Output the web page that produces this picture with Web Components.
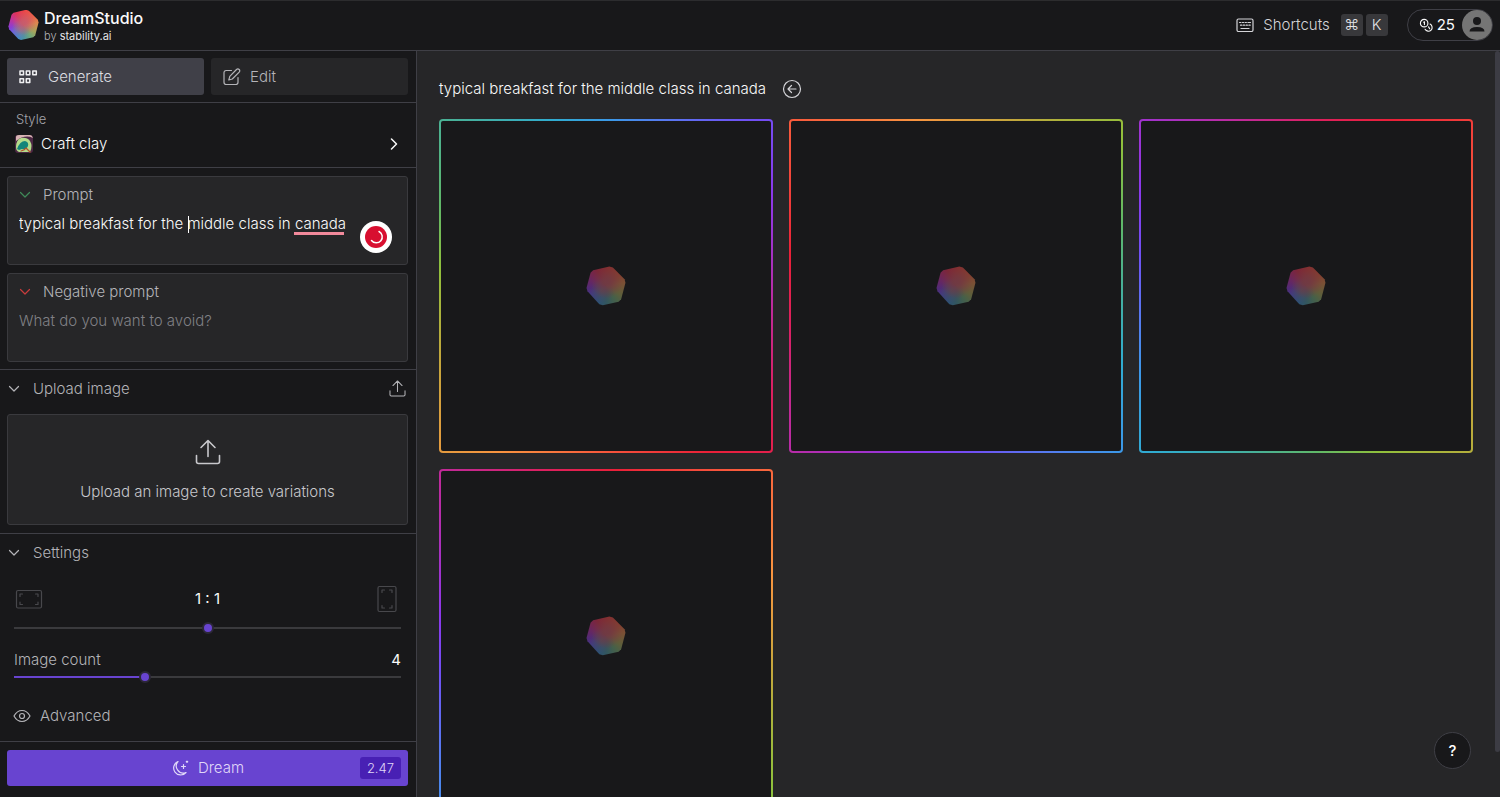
<!DOCTYPE html>
<html lang="en">
<head>
<meta charset="utf-8">
<meta name="viewport" content="width=device-width, initial-scale=1">
<title>DreamStudio</title>
<style>
  html, body { height: 100%; margin: 0; }
  body {
    background: #262628;
    color: #b4b4b8;
    font: 300 15px/20px Inter, "Open Sans", sans-serif;
    --panel: #18181a;
    --raised: #262628;
    --line: #3f3f46;
    --soft: #3a3a3e;
    --accent: #6844d0;
    --bright: #fafafa;
  }
</style>
</head>
<body>
<ds-app></ds-app>

<script>
const define = (name, render) => customElements.define(name, class extends HTMLElement {
  connectedCallback() {
    if (this.shadowRoot) return;
    this.attachShadow({ mode: 'open' }).innerHTML = render(this);
  }
});

const ICONS = {
  grid: [20, 14, '<g stroke-width="1.500" stroke="#f0f0f2"><rect x="1" y="1" width="3.500" height="3.800"/><rect x="7.300" y="1" width="3.500" height="3.800"/><rect x="13.800" y="1" width="3.500" height="3.800"/><rect x="1" y="8.800" width="3.500" height="3.800"/><rect x="7.300" y="8.800" width="3.500" height="3.800"/></g>'],
  edit: [18, 18, '<path d="M8.500 2.500H3.200Q1 2.500 1 4.700v9.600q0 2.200 2.200 2.200h9.600q2.200 0 2.200-2.200V9.500"/><path d="M13.500 1.500a1.900 1.900 0 0 1 2.700 2.700L9.300 11l-3.500 1 1-3.600z"/>'],
  right: [8, 12, '<path stroke-width="1.500" d="M1.500 1l5 5-5 5"/>'],
  down: [12, 8, '<path d="M1.500 1.500L6 6l4.500-4.500"/>'],
  upload: [26, 26, '<path d="M1.500 16.500v6q0 2 2 2h19q2 0 2-2v-6M13 17.500V2M6 8.500L13 1.500l7 7"/>'],
  keyboard: [18, 14, '<rect x="1" y="1" width="16" height="12.500" rx="1.500"/><path d="M3.500 4.500h1.300M6.300 4.500h1.300M9.100 4.500h1.300M11.900 4.500h2.600M4.500 7.200h1.300M7.300 7.200h1.300M10.100 7.200h1.300M12.900 7.200h1.300M5 10.500h8"/>'],
  coins: [16, 16, '<circle cx="5.500" cy="5.500" r="4"/><path d="M5 4.500l.8-.5v3M11.800 6.500a4 4 0 1 1-5.300 5.500M10.200 9.500l1.200 2"/>'],
  user: [30, 30, '<g fill="#18181a" stroke="none"><circle cx="15" cy="11" r="4"/><path d="M7.500 21.500q0-4.500 7.500-4.500t7.500 4.500z"/></g>'],
  back: [20, 20, '<circle cx="10" cy="10" r="8.500"/><path d="M14 10H6.500M9.500 6.500L6 10l3.500 3.500"/>'],
  eye: [18, 14, '<path d="M1 7q3-5.500 8-5.500T17 7q-3 5.500-8 5.500T1 7z"/><circle cx="9" cy="7" r="2.500"/>'],
  moon: [18, 18, '<path d="M7 2.500A7 7 0 1 0 15 13.500 7 7 0 0 1 7 2.500z"/><path d="M12.500 5.500v4M10.500 7.500h4M16 2v1.400M15.300 2.700h1.400"/>'],
  landscape: [28, 20, '<rect x="1.500" y="1.500" width="25" height="17.500" rx="1.500"/><path d="M5 7.500V5h2.500M20.500 5H23v2.500M23 13v2.500h-2.500M7.500 15.500H5V13"/>'],
  portrait: [20, 28, '<rect x="1" y="1.500" width="18" height="25" rx="1.500"/><path d="M5 7.500V5h2.500M12.500 5H15v2.500M15 20.500V23h-2.500M7.500 23H5v-2.500"/>'],
  bird: [18, 18, '<g stroke="none"><rect width="18" height="18" rx="3" fill="#4c2844"/><path d="M1 2q0-2 3-2h11q2 0 3 3-8-4-17 3z" fill="#d8b4b4"/><path d="M1 12q0-7 5-9 6-1 9 3 3 5 0 11H4q-3-1-3-5z" fill="#b4dc8c"/><path d="M2 14q3-8 8-8 4 1 3 5-2 4-6 3l-3 1z" fill="#14857a"/></g><path stroke="#b4502c" d="M6 16q4-1 5-3l4 4"/>']
};
define('ds-icon', el => {
  const [w, h, body] = ICONS[el.getAttribute('name')];
  const size = Number(el.getAttribute('width')) || w;
  return `<style>
    :host { display: inline-flex; flex: none; }
    svg { display: block; fill: none; stroke: currentColor; stroke-width: ${el.getAttribute('stroke') || 1.2}; stroke-linecap: round; stroke-linejoin: round; }
  </style><svg width="${size}" height="${Math.round(size * h / w)}" viewBox="0 0 ${w} ${h}" aria-hidden="true">${body}</svg>`;
});

define('ds-logo', () => `<style>
  :host { display: block; flex: none; width: 31px; height: 31px; }
  div {
    height: 100%;
    clip-path: polygon(17.8% 10.8%, 58.5% 1.2%, 67.2% 3.7%, 96.4% 33.3%, 98.7% 42.1%, 87.9% 82.9%, 81.6% 89.2%, 42% 98.4%, 33.3% 95.5%, 3.7% 63.4%, 1.3% 54.7%, 11.4% 16.7%);
    background:
      radial-gradient(circle at 52% 42%, #c85c6c, #c85c6ccc 15%, #c85c6c00 50%),
      radial-gradient(circle at 40% 62%, #7c7c9c, #7c7c9c00 35%),
      conic-gradient(from 0deg, #ec4448, #ec6448 50deg, #dc8850 80deg, #a4a45c 120deg, #74a878 145deg, #4c94a4 180deg, #4488cc 205deg, #6c5ce4 240deg, #8c3cd4 262deg, #c43494 300deg, #e03458 330deg, #ec4448);
  }
</style><div></div>`);

define('ds-header', () => `<style>
  :host { display: flex; align-items: center; box-sizing: border-box; height: 51px; padding: 0 7px 1px 8px; background: var(--panel); border-top: 1px solid #2c2c2e; border-bottom: 1px solid var(--line); }
  .brand { display: grid; margin-left: 5px; padding-top: 3px; line-height: 18px; }
  strong { color: var(--bright); font-size: 16px; font-weight: 500; }
  small { font-size: 11px; line-height: 18px; }
  small a { color: #e4e4e7; font-weight: 400; text-decoration: none; }
  .tools { margin-left: auto; display: flex; align-items: center; color: #d4d4d8; }
  button { font: inherit; color: inherit; background: none; border: 0; padding: 0; display: flex; align-items: center; cursor: pointer; }
  .label { margin: 0 11px 0 9px; }
  kbd { font: 300 15px/22px Inter, "DejaVu Sans", sans-serif; width: 22px; text-align: center; background: #38383b; border-radius: 3px; color: #e4e4e7; }
  kbd + kbd { margin-left: 3px; }
  .account { box-sizing: border-box; height: 32px; margin-left: 19px; padding-left: 11px; border: 1px solid var(--line); border-radius: 16px; color: var(--bright); font-weight: 400; }
  .account span { margin: 0 7px 0 3px; }
  .avatar { background: #757575; border-radius: 50%; }
</style>
<ds-logo></ds-logo>
<div class="brand"><strong>DreamStudio</strong><small>by <a href="#stability">stability.ai</a></small></div>
<div class="tools">
  <button type="button"><ds-icon name="keyboard"></ds-icon><span class="label">Shortcuts</span><kbd>⌘</kbd><kbd>K</kbd></button>
  <button type="button" class="account" aria-label="Account, 25 credits"><ds-icon name="coins" width="15"></ds-icon><span>25</span><ds-icon class="avatar" name="user"></ds-icon></button>
</div>`);

define('ds-tab', el => `<style>
  :host { display: block; }
  button { font: inherit; color: inherit; display: flex; align-items: center; gap: 9px; width: 100%; height: 37px; padding: 0 12px; border: 0; border-radius: 3px; background: var(--raised); cursor: pointer; }
  :host([active]) button { background: #404048; color: #dcdce0; }
</style><button type="button" aria-pressed="${el.hasAttribute('active')}"><ds-icon name="${el.getAttribute('icon')}"></ds-icon><slot></slot></button>`);

define('ds-style-picker', () => `<style>
  :host { display: block; border-bottom: 1px solid var(--line); }
  button { font: inherit; color: inherit; text-align: left; display: grid; grid-template-columns: auto 1fr auto; align-items: center; gap: 5px 8px; box-sizing: border-box; width: 100%; height: 64px; padding: 6px 18px 13px 15px; background: none; border: 0; cursor: pointer; }
  .label { grid-column: 1 / -1; font-size: 13px; line-height: 20px; padding-left: 1px; color: #a4a4aa; }
  .value { color: var(--bright); }
  ds-icon { color: var(--bright); }
</style><button type="button"><span class="label">Style</span><ds-icon name="bird"></ds-icon><span class="value"><slot></slot></span><ds-icon name="right"></ds-icon></button>`);

define('ds-prompt', el => `<style>
  :host { display: block; position: relative; box-sizing: border-box; height: 89px; padding: 8px 11px; background: var(--raised); border: 1px solid var(--soft); border-radius: 3px; }
  label { display: flex; align-items: center; gap: 12px; height: 20px; }
  label ds-icon { color: var(--tone); }
  textarea { font: inherit; color: var(--bright); display: block; width: 100%; height: 40px; margin-top: 9px; padding: 0; background: none; border: 0; outline: 0; resize: none; overflow: hidden; }
  textarea::placeholder { color: #808085; opacity: 1; }
</style>
<label for="text"><ds-icon name="down"></ds-icon>${el.getAttribute('label')}</label>
<textarea id="text" spellcheck="false" placeholder="${el.getAttribute('placeholder') || ''}">${el.getAttribute('value') || ''}</textarea>
<slot></slot>`);

define('ds-writing-marks', () => `<style>
  :host { display: contents; }
  i { position: absolute; }
  .caret { left: 180px; top: 39px; width: 1px; height: 17px; background: #fff; }
  .spell { left: 286px; top: 55px; width: 50px; height: 3px; background: #f28a9c; }
  button { position: absolute; right: 15px; top: 44px; width: 32px; height: 32px; padding: 5px; border: 0; border-radius: 50%; background: #fff; }
  svg { display: block; }
</style>
<i class="caret"></i><i class="spell"></i>
<button type="button" aria-label="Writing suggestions"><svg width="22" height="22" viewBox="0 0 22 22"><circle cx="11" cy="11" r="11" fill="#d80f30"/><path d="M14 5.500a6 6 0 1 1-7.500 9" fill="none" stroke="#fff" stroke-width="1.500" stroke-linecap="round"/></svg></button>`);

define('ds-section', el => `<style>
  :host { display: block; }
  header { display: flex; align-items: center; height: 37px; padding: 0 10px 0 8px; }
  button { font: inherit; color: inherit; display: flex; align-items: center; gap: 13px; padding: 0; border: 0; background: none; cursor: pointer; }
  .action { margin-left: auto; display: flex; }
</style><header><button type="button" aria-expanded="true"><ds-icon name="down"></ds-icon>${el.getAttribute('label')}</button><span class="action"><slot name="action"></slot></span></header><slot></slot>`);

define('ds-dropzone', () => `<style>
  :host { display: block; margin: 7px 8px 8px 7px; }
  button { font: inherit; color: #c8c8cc; display: flex; flex-direction: column; align-items: center; justify-content: center; gap: 17px; box-sizing: border-box; width: 100%; height: 111px; padding: 1px 0 0; background: var(--raised); border: 1px solid var(--soft); border-radius: 3px; cursor: pointer; }
</style><button type="button"><ds-icon name="upload" stroke="1.6"></ds-icon><slot></slot></button>`);

define('ds-slider', el => `<style>
  :host { display: block; }
  .row { display: grid; grid-template-columns: 1fr auto 1fr; align-items: center; }
  :host([label]) .row { grid-template-columns: 1fr auto; }
  output { color: var(--bright); font-weight: 400; }
  slot[name=end] { display: flex; justify-content: flex-end; }
  :host([label]) slot { display: none; }
  input { appearance: none; display: block; width: 100%; height: 14px; margin: var(--gap, 0) 0 0; background: linear-gradient(90deg, var(--accent) var(--fill, 0%), #3a3a3d var(--fill, 0%)) center / 100% 2px no-repeat; }
  input::-webkit-slider-thumb { appearance: none; box-sizing: border-box; width: 12px; height: 12px; border: 2px solid #2c2838; border-radius: 50%; background: var(--accent); }
  input::-moz-range-thumb { box-sizing: border-box; width: 12px; height: 12px; border: 2px solid #2c2838; border-radius: 50%; background: var(--accent); }
</style><div class="row"><slot name="start"></slot>${el.hasAttribute('label') ? `<label for="range">${el.getAttribute('label')}</label>` : ''}<output for="range">${el.getAttribute('text')}</output><slot name="end"></slot></div>
<input id="range" type="range" min="${el.getAttribute('min')}" max="${el.getAttribute('max')}" value="${el.getAttribute('value')}" ${el.hasAttribute('label') ? '' : 'aria-label="Aspect ratio"'}>`);

define('ds-sidebar', () => `<style>
  :host { display: flex; flex-direction: column; box-sizing: border-box; background: var(--panel); border-right: 1px solid var(--line); min-height: 0; overflow: hidden; }
  .tabs { display: grid; grid-template-columns: 1fr 1fr; gap: 7px; padding: 7px 8px 7px 7px; border-bottom: 1px solid var(--line); }
  .prompts { display: grid; gap: 8px; padding: 8px 8px 7px 7px; border-bottom: 1px solid var(--line); }
  .upload { border-bottom: 1px solid var(--line); }
  .settings { flex: 1; }
  .body { padding: 0 15px 0 14px; }
  .ratio { --gap: 8px; margin-top: 14px; }
  .ratio ds-icon { color: #48484c; margin: 0 4px 0 1px; }
  .count { margin-top: 15px; }
  .advanced { font: inherit; color: inherit; display: flex; align-items: center; gap: 9px; margin: 22px 0 0 -1px; padding: 0; border: 0; background: none; cursor: pointer; }
  footer { padding: 8px 8px 11px 7px; border-top: 1px solid var(--line); }
  .dream { position: relative; font: inherit; color: #e0d8f8; display: flex; align-items: center; justify-content: center; gap: 9px; width: 100%; height: 36px; border: 0; padding: 0; border-radius: 3px; background: var(--accent); cursor: pointer; }
  .cost { position: absolute; right: 7px; padding: 0 7px; line-height: 22px; font-size: 13px; border-radius: 3px; background: #4820b4; }
</style>
<nav class="tabs"><ds-tab icon="grid" active>Generate</ds-tab><ds-tab icon="edit">Edit</ds-tab></nav>
<ds-style-picker>Craft clay</ds-style-picker>
<div class="prompts">
  <ds-prompt style="--tone:#3f8a58" label="Prompt" value="typical breakfast for the middle class in canada"><ds-writing-marks></ds-writing-marks></ds-prompt>
  <ds-prompt style="--tone:#c83c3c" label="Negative prompt" placeholder="What do you want to avoid?"></ds-prompt>
</div>
<ds-section class="upload" label="Upload image"><ds-icon slot="action" name="upload" width="17" stroke="1.6"></ds-icon><ds-dropzone>Upload an image to create variations</ds-dropzone></ds-section>
<ds-section class="settings" label="Settings">
  <div class="body">
    <ds-slider class="ratio" min="-5" max="5" value="0" text="1 : 1"><ds-icon slot="start" name="landscape"></ds-icon><ds-icon slot="end" name="portrait"></ds-icon></ds-slider>
    <ds-slider class="count" style="--fill:34%" label="Image count" min="1" max="10" value="4" text="4"></ds-slider>
    <button type="button" class="advanced"><ds-icon name="eye"></ds-icon>Advanced</button>
  </div>
</ds-section>
<footer><button type="button" class="dream"><ds-icon name="moon"></ds-icon>Dream<span class="cost">2.47</span></button></footer>`);

define('ds-card', el => `<style>
  :host { display: block; box-sizing: border-box; aspect-ratio: 1; padding: 2px; border-radius: 4px;
    background: conic-gradient(from ${el.getAttribute('turn')}deg, #ea2038, #f85a3c 34deg, #f89440 65deg, #c0a83c 100deg, #90c03c 128deg, #60b868 148deg, #48b098 169deg, #30acd0 194deg, #3c98e8 214deg, #5878f0 232deg, #7050f4 253deg, #8c38ec 273deg, #b82ca8 304deg, #dc2060 335deg, #ea2038); }
  div { height: 100%; display: grid; place-items: center; background: var(--panel); border-radius: 2px; }
  ds-logo { width: 40px; height: 40px; opacity: .5; }
</style><div><ds-logo></ds-logo></div>`);

define('ds-gallery', () => `<style>
  :host { display: flex; min-width: 0; min-height: 0; overflow: hidden; background: var(--raised); }
  main { flex: 1; min-width: 0; padding: 28px 22px 22px; }
  header { display: flex; align-items: center; gap: 16px; height: 20px; margin-bottom: 20px; }
  h1 { margin: 0; font-size: 15px; line-height: 20px; font-weight: 300; color: var(--bright); }
  header button { display: flex; padding: 0; border: 0; background: none; color: #d4d4d8; cursor: pointer; }
  .grid { display: grid; grid-template-columns: repeat(3, 1fr); gap: 16px; }
  .rail { width: 5px; }
  .thumb { height: 94%; background: #3c3c44; border-radius: 3px; }
</style>
<main>
  <header><h1>typical breakfast for the middle class in canada</h1><button type="button" aria-label="Reuse prompt"><ds-icon name="back"></ds-icon></button></header>
  <div class="grid"><ds-card turn="148"></ds-card><ds-card turn="281"></ds-card><ds-card turn="28"></ds-card><ds-card turn="4"></ds-card></div>
</main>
<div class="rail"><div class="thumb"></div></div>`);

define('ds-app', () => `<style>
  :host { display: grid; grid-template: auto minmax(0, 1fr) / 417px minmax(0, 1fr); height: 100vh; position: relative; overflow: hidden; }
  ds-header { grid-column: 1 / -1; }
  .help { position: absolute; right: 29px; bottom: 28px; width: 37px; height: 37px; padding: 0; border: 1px solid var(--line); border-radius: 50%; background: var(--panel); color: #fff; font: 500 15px/20px Inter, sans-serif; cursor: pointer; }
</style>
<ds-header></ds-header><ds-sidebar></ds-sidebar><ds-gallery></ds-gallery>
<button type="button" class="help" aria-label="Help">?</button>`);
</script>
</body>
</html>
